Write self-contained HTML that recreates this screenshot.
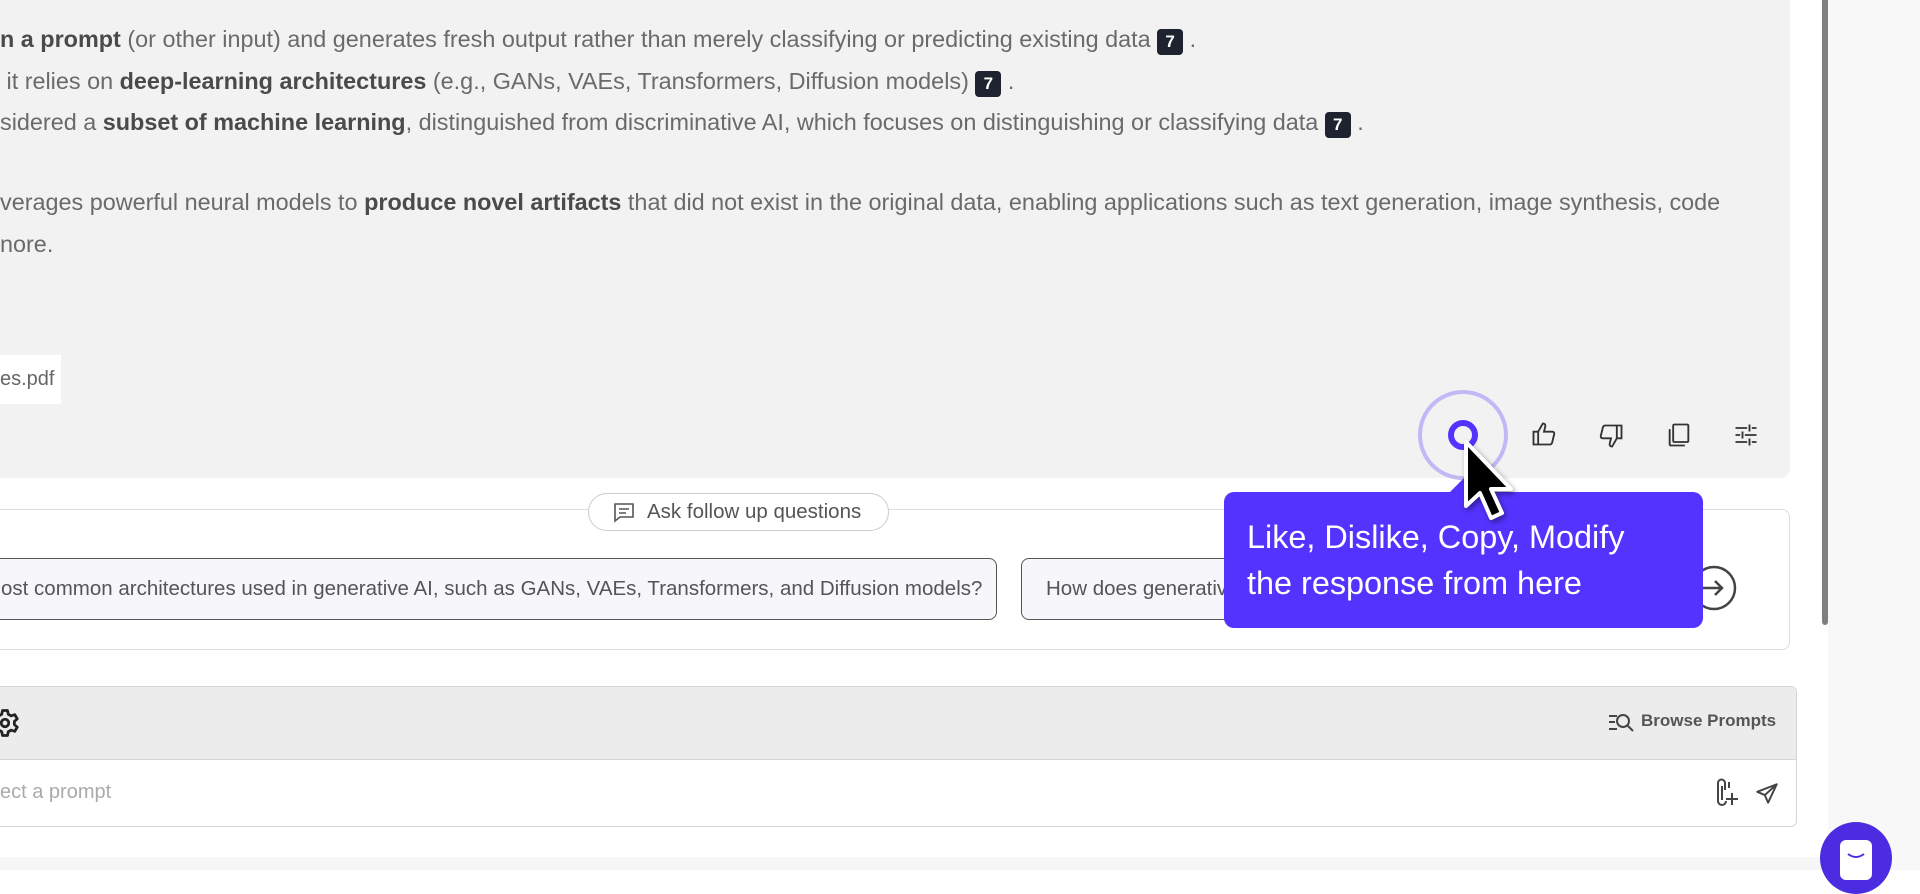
<!DOCTYPE html>
<html><head><meta charset="utf-8"><style>
*{margin:0;padding:0;box-sizing:border-box}
body{width:1920px;height:870px;overflow:hidden;background:#fff;font-family:"Liberation Sans",sans-serif;position:relative;color:#666}
.abs{position:absolute}
.resp{left:0;top:0;width:1790px;height:478px;background:#f2f2f2;border-radius:0 0 10px 0}
.t{position:absolute;left:0;font-size:23.4px;color:#6a6a6a;white-space:nowrap}
.t b{color:#4a4a4a}
.n{display:inline-block;background:#1f2330;color:#fff;font-size:17px;width:26px;height:26px;line-height:26px;text-align:center;border-radius:4px;font-weight:bold;vertical-align:0px}
.chip{border:1px solid #555;border-radius:8px;background:#f7f7fb;font-size:20.5px;color:#555;line-height:60px;white-space:nowrap;overflow:hidden}
</style></head><body>
<div class="abs resp"></div>
<div class="t" style="top:26px"><b>n a prompt</b> (or other input) and generates fresh output rather than merely classifying or predicting existing data <span class="n">7</span> .</div>
<div class="t" style="top:68px">&nbsp;it relies on <b>deep-learning architectures</b> (e.g., GANs, VAEs, Transformers, Diffusion models) <span class="n">7</span> .</div>
<div class="t" style="top:109px">sidered a <b>subset of machine learning</b>, distinguished from discriminative AI, which focuses on distinguishing or classifying data <span class="n">7</span> .</div>
<div class="t" style="top:189px">verages powerful neural models to <b>produce novel artifacts</b> that did not exist in the original data, enabling applications such as text generation, image synthesis, code</div>
<div class="t" style="top:231px">nore.</div>
<div class="abs" style="left:0;top:355px;width:61px;height:49px;background:#fff;font-size:20px;line-height:49px;color:#666">es.pdf</div>
<div class="abs" style="left:1418px;top:390px;width:90px;height:90px;border-radius:50%;border:4px solid #c3b8f5"></div>
<div class="abs" style="left:1448px;top:420px;width:30px;height:30px;border-radius:50%;border:6px solid #5533ff"></div>
<svg class="abs" style="left:1530px;top:420px" width="28" height="28" viewBox="0 0 24 24" fill="none" stroke="#333" stroke-width="1.6"><path d="M3 10h4v11H3zM7 10l4-7c2 0 2.5 1.5 2 3l-1 4h7c1.5 0 2 1 1.7 2.3l-1.7 7c-.3 1-1 1.7-2 1.7H7"/></svg>
<svg class="abs" style="left:1597px;top:422px" width="28" height="28" viewBox="0 0 24 24" fill="none" stroke="#333" stroke-width="1.6"><path d="M17 14h4V3h-4zM17 14l-4 7c-2 0-2.5-1.5-2-3l1-4H5c-1.5 0-2-1-1.7-2.3l1.7-7C5.3 3.7 6 3 7 3h10"/></svg>
<svg class="abs" style="left:1665px;top:421px" width="28" height="28" viewBox="0 0 24 24" fill="none" stroke="#333" stroke-width="1.6"><rect x="7" y="3" width="13" height="15" rx="1"/><path d="M4 7v13a1 1 0 0 0 1 1h12"/></svg>
<svg class="abs" style="left:1732px;top:421px" width="28" height="28" viewBox="0 0 24 24" fill="none" stroke="#333" stroke-width="1.6"><path d="M3 6h10M17 6h4M15 3v6M3 12h4M11 12h10M9 9v6M3 18h10M17 18h4M15 15v6"/></svg>
<div class="abs" style="left:-10px;top:509px;width:1800px;height:141px;border:1px solid #ddd;border-radius:8px;background:#fff"></div>
<div class="abs" style="left:588px;top:493px;width:301px;height:38px;border:1px solid #ccc;border-radius:19px;background:#fff;font-size:20.5px;color:#555;line-height:36px;padding-left:58px;white-space:nowrap">Ask follow up questions</div>
<svg class="abs" style="left:612px;top:500px" width="24" height="24" viewBox="0 0 24 24" fill="none" stroke="#555" stroke-width="1.6"><path d="M3 4h18v13H8l-5 4z"/><path d="M7 9h10M7 13h7"/></svg>
<div class="abs chip" style="left:-20px;top:558px;width:1017px;height:62px;padding-left:20px">ost common architectures used in generative AI, such as GANs, VAEs, Transformers, and Diffusion models?</div>
<div class="abs chip" style="left:1021px;top:558px;width:300px;height:62px;padding-left:24px">How does generative AI</div>
<svg class="abs" style="left:1690px;top:564px" width="48" height="48" viewBox="0 0 48 48" fill="none" stroke="#444" stroke-width="2.5"><circle cx="24" cy="24" r="21"/><path d="M13 24h19M25 17l7 7-7 7"/></svg>
<div class="abs" style="left:1444px;top:478px;width:0;height:0;border-left:20px solid transparent;border-right:20px solid transparent;border-bottom:20px solid #5533ff"></div>
<div class="abs" style="left:1224px;top:492px;width:479px;height:136px;background:#5533ff;border-radius:10px;color:#fff;font-size:32.4px;line-height:46px;padding:22px 0 0 23px;white-space:nowrap">Like, Dislike, Copy, Modify<br>the response from here</div>
<svg class="abs" style="left:1462px;top:438px;filter:drop-shadow(2px 3px 3px rgba(0,0,0,.4))" width="60" height="90" viewBox="0 0 60 90"><path d="M4 4v64l14-13 11 25 11-5-11-24h20z" fill="#000" stroke="#fff" stroke-width="4" stroke-linejoin="round"/></svg>
<div class="abs" style="left:-10px;top:686px;width:1807px;height:141px;border:1px solid #d6d6d6;border-radius:6px;background:#fff;overflow:hidden">
<div style="height:73px;background:#ececec;border-bottom:1px solid #d6d6d6"></div></div>
<svg class="abs" style="left:-10px;top:708px" width="30" height="30" viewBox="0 0 24 24" fill="none" stroke="#222" stroke-width="2.2" stroke-linejoin="round"><circle cx="12" cy="12" r="3"/><path d="M10 2h4l.6 3 2.3 1.3 2.9-1 2 3.4-2.3 2v2.6l2.3 2-2 3.4-2.9-1-2.3 1.3-.6 3h-4l-.6-3-2.3-1.3-2.9 1-2-3.4 2.3-2v-2.6l-2.3-2 2-3.4 2.9 1L9.4 5z"/></svg>
<svg class="abs" style="left:1607px;top:711px" width="28" height="24" viewBox="0 0 28 24" fill="none" stroke="#444" stroke-width="2"><path d="M2 5h8M2 11h6M2 18h8"/><circle cx="16" cy="10" r="6"/><path d="M20.5 14.5L26 20"/></svg>
<div class="abs" style="left:1641px;top:711px;font-size:17px;font-weight:bold;color:#555">Browse Prompts</div>
<div class="abs" style="left:0;top:781px;font-size:20px;color:#aaa">ect a prompt</div>
<svg class="abs" style="left:1714px;top:778px" width="26" height="30" viewBox="0 0 26 30" fill="none" stroke="#444" stroke-width="2"><path d="M11 12V5a3.5 3.5 0 0 0-7 0v18a4 4 0 0 0 8 0"/><path d="M8 8v14M15 4v6M18 15v12M12 21h12"/></svg>
<svg class="abs" style="left:1754px;top:781px" width="26" height="26" viewBox="0 0 24 24" fill="none" stroke="#444" stroke-width="1.8" stroke-linejoin="round"><path d="M21 3L3 10l7 3 3 7z M10 13l11-10"/></svg>
<div class="abs" style="left:1828px;top:0;width:92px;height:870px;background:#f8f8f8"></div>
<div class="abs" style="left:1822px;top:0;width:6px;height:625px;background:#808080;border-radius:0 0 3px 3px"></div>
<div class="abs" style="left:0;top:857px;width:1828px;height:13px;background:#f6f6f6"></div>
<div class="abs" style="left:1820px;top:822px;width:72px;height:72px;border-radius:50%;background:#4c2ce0"></div>
<div class="abs" style="left:1840px;top:840px;width:32px;height:40px;border-radius:6px;background:#fff"></div>
<svg class="abs" style="left:1840px;top:848px" width="32" height="16" viewBox="0 0 32 16"><path d="M8 6q8 6 16 0" fill="none" stroke="#4c2ce0" stroke-width="2"/></svg>
</body></html>
